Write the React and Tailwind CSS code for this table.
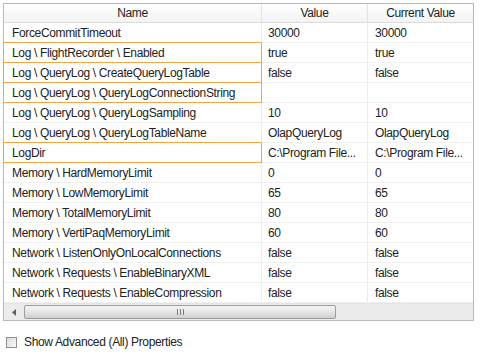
import React from "react";

const rows = [
  { name: "ForceCommitTimeout", value: "30000", current: "30000" },
  { name: "Log \\ FlightRecorder \\ Enabled", value: "true", current: "true", mark: true },
  { name: "Log \\ QueryLog \\ CreateQueryLogTable", value: "false", current: "false", mark: true },
  { name: "Log \\ QueryLog \\ QueryLogConnectionString", value: "", current: "", mark: true },
  { name: "Log \\ QueryLog \\ QueryLogSampling", value: "10", current: "10" },
  { name: "Log \\ QueryLog \\ QueryLogTableName", value: "OlapQueryLog", current: "OlapQueryLog" },
  { name: "LogDir", value: "C:\\Program File...", current: "C:\\Program File...", mark: true },
  { name: "Memory \\ HardMemoryLimit", value: "0", current: "0" },
  { name: "Memory \\ LowMemoryLimit", value: "65", current: "65" },
  { name: "Memory \\ TotalMemoryLimit", value: "80", current: "80" },
  { name: "Memory \\ VertiPaqMemoryLimit", value: "60", current: "60" },
  { name: "Network \\ ListenOnlyOnLocalConnections", value: "false", current: "false" },
  { name: "Network \\ Requests \\ EnableBinaryXML", value: "false", current: "false" },
  { name: "Network \\ Requests \\ EnableCompression", value: "false", current: "false" },
];

const font = { fontFamily: '"Liberation Sans", Arial, sans-serif' };

export default function App() {
  return (
    <div
      className="w-[482px] h-[359px] bg-white text-[12px] tracking-[-0.35px] text-[#222222] pt-[3px] pl-[3px] flex flex-col"
      style={font}
    >
      {/* property grid */}
      <div className="w-[471px] border border-[#b9b9b9] flex flex-col">
        {/* column headers */}
        <div className="flex h-[19px] bg-gradient-to-b from-white to-[#f3f3f3] border-b border-[#dcdcdc]">
          <div className="w-[258px] flex items-center justify-center border-r border-[#e2e2e2]">Name</div>
          <div className="w-[106px] flex items-center justify-center border-r border-[#e2e2e2]">Value</div>
          <div className="flex-1 flex items-center justify-center">Current Value</div>
        </div>

        {rows.map((r) => (
          <div key={r.name} className="flex h-[20px] border-b border-[#f0f0f0]">
            <div className="relative w-[258px] flex items-center pl-[8px] border-r border-[#ececec]">
              {r.mark && (
                <span className="absolute -top-px -left-px right-[-1px] -bottom-px border border-[#f1a646]" />
              )}
              <span className="relative">{r.name}</span>
            </div>
            <div className="w-[106px] flex items-center pl-[6px] border-r border-[#ececec]">{r.value}</div>
            <div className="flex-1 flex items-center pl-[7px]">{r.current}</div>
          </div>
        ))}

        {/* horizontal scrollbar */}
        <div className="flex h-[17px] bg-[#ececec] border-t border-[#e4e4e4]">
          <div className="w-[20px] flex items-center justify-center">
            <svg width="4" height="7" viewBox="0 0 4 7">
              <path d="M4 0 L0 3.5 L4 7 Z" fill="#606060" />
            </svg>
          </div>
          <div className="w-[312px] my-px rounded-[2px] border border-[#9c9c9c] bg-gradient-to-b from-[#f4f4f4] via-[#e6e6e6] to-[#cfcfcf] flex items-center justify-center">
            <div className="flex gap-[2px] h-[6px]">
              <span className="w-px bg-[#7b7b7b]" />
              <span className="w-px bg-[#7b7b7b]" />
              <span className="w-px bg-[#7b7b7b]" />
            </div>
          </div>
          <div className="flex-1" />
        </div>
      </div>

      {/* advanced toggle */}
      <div className="flex items-center gap-[7px] mt-[12px] pl-[3px]">
        <span className="w-[11px] h-[11px] border border-[#8f8f8f] bg-gradient-to-br from-[#dcdcdc] to-[#f8f8f8]" />
        <span>Show Advanced (All) Properties</span>
      </div>
    </div>
  );
}
